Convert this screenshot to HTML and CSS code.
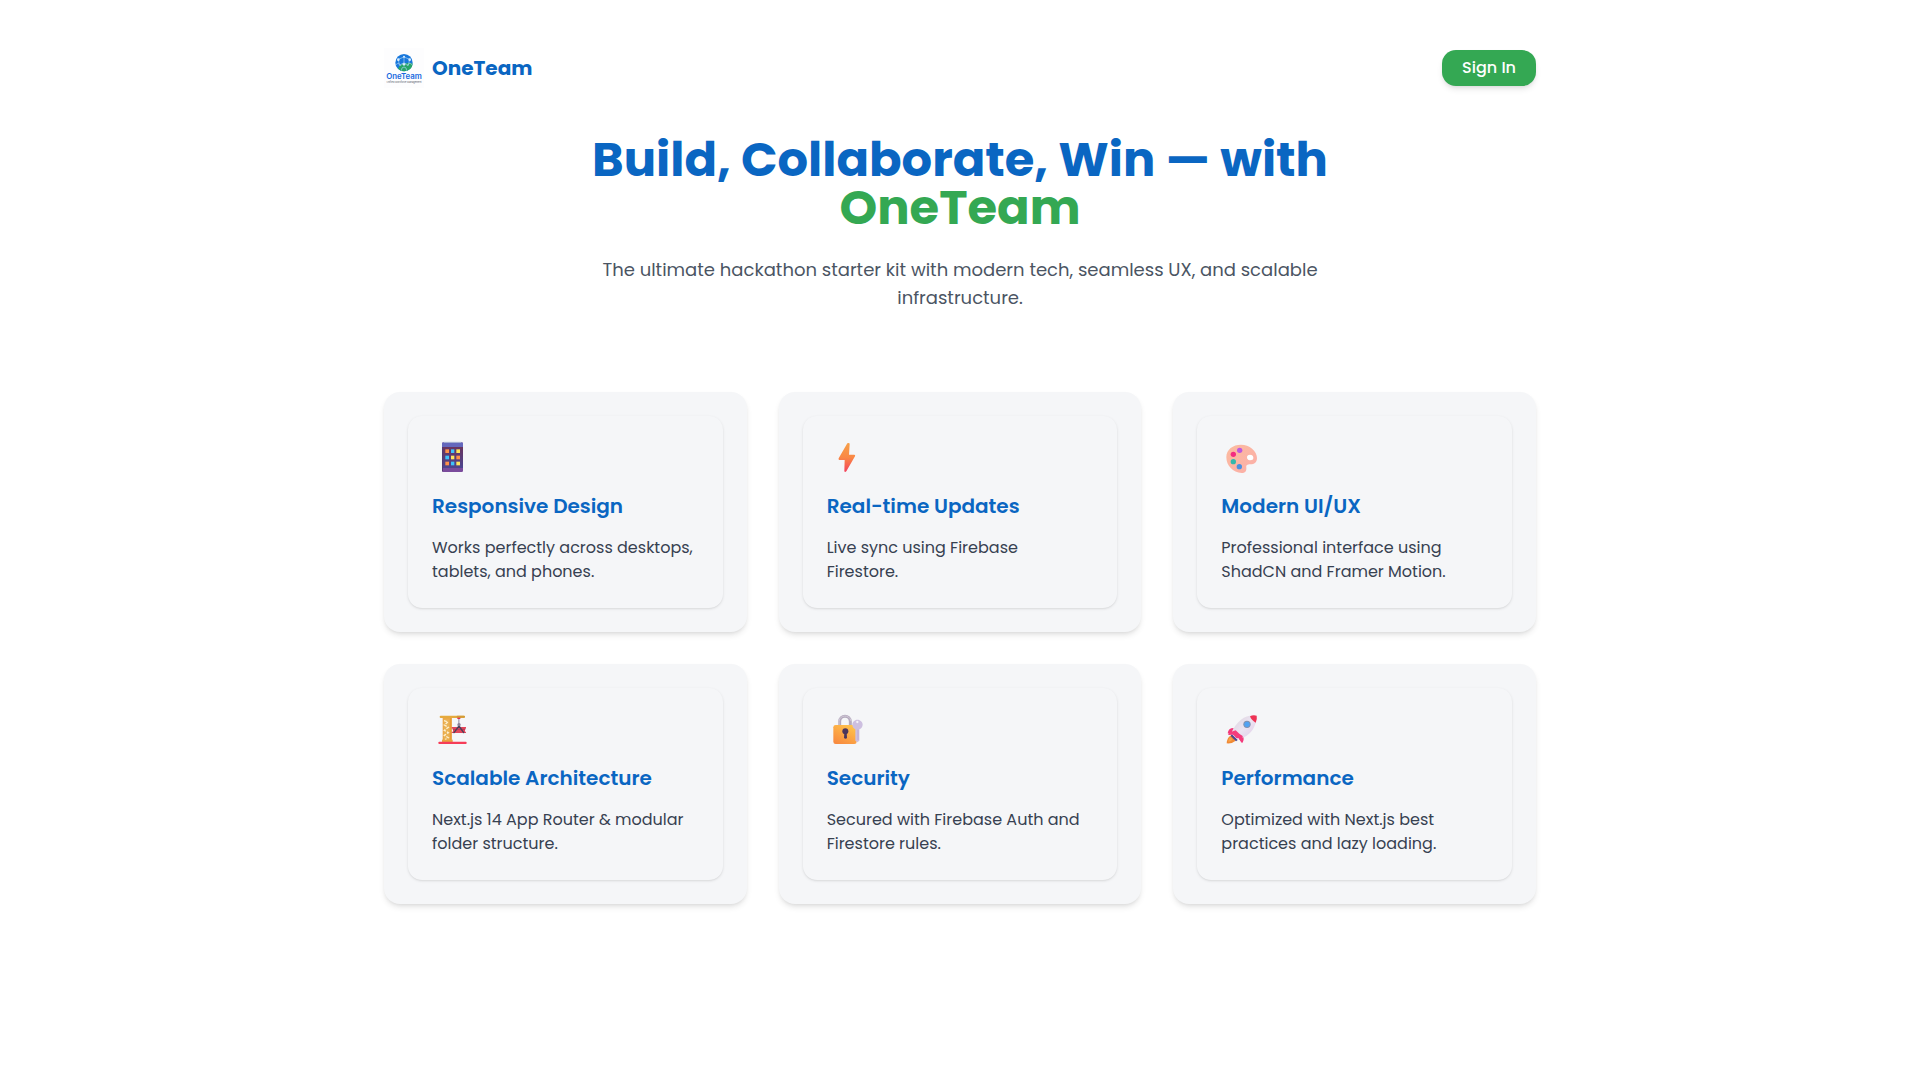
FILE: index.html
```html
<!DOCTYPE html>
<html lang="en">
<head>
<meta charset="utf-8">
<title>OneTeam</title>
<link rel="stylesheet" href="styles.css">
</head>
<body>
<div class="page">
  <header class="nav">
    <div class="brand">
      <svg class="logo" viewBox="0 0 120 120">
        <rect width="120" height="120" fill="#fdfdfe"/>
        <circle cx="60" cy="44" r="26" fill="#1877dc"/>
        <path d="M42 62 Q50 44 60 49 Q73 41 86 47 Q84 67 61 70 Q50 70 42 62Z" fill="#27a568"/>
        <g fill="none" stroke="#a9d3f5" stroke-width="2">
          <path d="M43 34 L60 27 L77 34 L73 52 L60 44 L46 52 Z M60 27 V44"/>
          <path d="M52 68 Q52 57 60 57 Q68 57 68 68 M36 50 Q44 41 51 54 M84 50 Q76 41 69 54"/>
        </g>
        <g fill="#d8ecfd"><circle cx="60" cy="26" r="3"/><circle cx="43" cy="35" r="4"/><circle cx="77" cy="35" r="4"/><circle cx="60" cy="49" r="4"/></g>
        <text class="logo-name" x="60" y="94" text-anchor="middle">OneTeam</text>
        <text class="logo-tag" x="60" y="105" text-anchor="middle">Unified Workforce Management</text>
      </svg>
      <span class="brand-name">OneTeam</span>
    </div>
    <button class="signin">Sign In</button>
  </header>

  <section class="hero">
    <h1 class="headline">Build, Collaborate, Win — with <span class="accent">OneTeam</span></h1>
    <p class="lead">The ultimate hackathon starter kit with modern tech, seamless UX, and scalable infrastructure.</p>
  </section>

  <main class="features">
    <div class="card"><div class="panel">
      <svg class="icon" viewBox="6 30 120 120">
        <defs><linearGradient id="tab" x1="0" y1="0" x2="0" y2="1"><stop offset="0" stop-color="#69345f"/><stop offset="1" stop-color="#4b4590"/></linearGradient></defs>
        <rect x="36" y="37" width="63" height="89" rx="4" fill="#7a4b9c"/>
        <path d="M40 37H95l4 3v11H36V40z" fill="#6468bd"/>
        <path d="M41 37H94" stroke="#aebbd8" stroke-width="3"/>
        <rect x="36" y="51" width="63" height="63" fill="url(#tab)"/>
        <path d="M37.500 51V124" stroke="#523973" stroke-width="3"/>
        <g fill="#ff9148"><rect x="46" y="58" width="11" height="11"/><rect x="79" y="77" width="11" height="11"/><rect x="46" y="95" width="11" height="11"/></g>
        <g fill="#3fc2fb"><rect x="63" y="58" width="10" height="11"/><rect x="46" y="77" width="11" height="11"/><rect x="63" y="95" width="10" height="11"/></g>
        <g fill="#ffe65c"><rect x="79" y="58" width="11" height="11"/><rect x="63" y="77" width="10" height="11"/><rect x="79" y="95" width="11" height="11"/></g>
      </svg>
      <h2 class="title">Responsive Design</h2>
      <p class="text">Works perfectly across desktops, tablets, and phones.</p>
    </div></div>

    <div class="card"><div class="panel">
      <svg class="icon" viewBox="8 30 120 120">
        <defs><linearGradient id="bolt" x1="0" y1="0" x2="0" y2="1"><stop offset="0" stop-color="#f6a04a"/><stop offset=".5" stop-color="#fa8845"/><stop offset="1" stop-color="#f3415c"/></linearGradient></defs>
        <path d="M69 39.500Q76 37 76 42L74 74H90Q94 75 92 79L66 124Q61 128 60 123L61 90H45Q41 89 43 85Z" fill="url(#bolt)"/>
      </svg>
      <h2 class="title">Real-time Updates</h2>
      <p class="text">Live sync using Firebase Firestore.</p>
    </div></div>

    <div class="card"><div class="panel">
      <svg class="icon" viewBox="16 30 120 120">
        <defs><linearGradient id="pal" x1="0" y1="0" x2="1" y2="1"><stop offset="0" stop-color="#fcbb9f"/><stop offset="1" stop-color="#fbaea9"/></linearGradient></defs>
        <path d="M76 44C101 44 124 62 124 84C124 97 116 103 104 103C94 103 91 106 92 113C93 123 88 129 78 129C52 128 32 107 32 82C32 58 52 44 76 44ZM103 74C96 74 93 78 94 83C95 88 99 91 104 91C111 91 114 87 113 82C112 77 109 74 103 74Z" fill="url(#pal)" fill-rule="evenodd"/>
        <ellipse cx="103.500" cy="82.500" rx="8.500" ry="7.500" fill="#fff"/>
        <circle cx="72" cy="61" r="8" fill="#bd58df"/><circle cx="53" cy="73" r="8" fill="#f32c80"/><circle cx="53" cy="95" r="8" fill="#32b8ac"/><circle cx="71" cy="110" r="8" fill="#498fe0"/>
      </svg>
      <h2 class="title">Modern UI/UX</h2>
      <p class="text">Professional interface using ShadCN and Framer Motion.</p>
    </div></div>

    <div class="card"><div class="panel">
      <svg class="icon" viewBox="6 24 120 120">
        <path d="M38 41H65V114H38Z" fill="#eba747"/>
        <path d="M42 46H58V108H42Z" fill="#e9b255"/>
        <path d="M42 50L54 54L43 63L55 70L43 79L55 86L43 94L55 101L45 107" fill="none" stroke="#fff0cf" stroke-width="4" stroke-dasharray="9 4"/>
        <path d="M60 42H65V109H60Z" fill="#e99a35"/>
        <rect x="29" y="35" width="75" height="7" rx="3" fill="#e5aa3e"/>
        <rect x="80" y="35" width="25" height="6" rx="2" fill="#d39c38"/>
        <rect x="36" y="107" width="32" height="7" fill="#e9a440"/>
        <rect x="25" y="113" width="85" height="7" rx="3" fill="#f63d58"/>
        <path d="M82 41H91V45H82Z" fill="#dd3151"/>
        <path d="M86.500 45V61" stroke="#a7a0b4" stroke-width="4"/>
        <path d="M65 69H108V74H105V83H108V87H65V83H69V74H65Z" fill="#e2475b"/>
        <path d="M68 76H106" stroke="#ba3853" stroke-width="3"/>
        <path d="M87 66L72 86M87 66L101 86" stroke="#4c3e59" stroke-width="4" stroke-linecap="round"/>
        <circle cx="87" cy="62" r="5" fill="#8b8298"/>
      </svg>
      <h2 class="title">Scalable Architecture</h2>
      <p class="text">Next.js 14 App Router &amp; modular folder structure.</p>
    </div></div>

    <div class="card"><div class="panel">
      <svg class="icon" viewBox="8 24 120 120">
        <defs><linearGradient id="lock" x1=".8" y1="0" x2=".2" y2="1"><stop offset="0" stop-color="#ffc44c"/><stop offset="1" stop-color="#f88a3f"/></linearGradient></defs>
        <path d="M46 68V53C46 31 78 31 78 53V68" fill="none" stroke="#b5aabd" stroke-width="9"/>
        <path d="M44 66V52C45 32 76 30 80 51" fill="none" stroke="#d2cad9" stroke-width="3"/>
        <rect x="27" y="63" width="70" height="57" rx="7" fill="url(#lock)"/>
        <circle cx="63" cy="82" r="9" fill="#4b365c"/><path d="M60 85H67L68 102Q64 107 59 102Z" fill="#4b365c"/>
        <path d="M99 47C108 47 115 54 115 62C115 69 110 74 105 76V110L99 115L93 110V76C88 73 84 68 84 62C84 54 91 47 99 47Z" fill="#cdbfe0"/>
        <path d="M101 77V108" stroke="#bbaad3" stroke-width="3"/><circle cx="99" cy="54" r="3.500" fill="#f4f2f8"/>
      </svg>
      <h2 class="title">Security</h2>
      <p class="text">Secured with Firebase Auth and Firestore rules.</p>
    </div></div>

    <div class="card"><div class="panel">
      <svg class="icon" viewBox="16 24 120 120">
        <defs><linearGradient id="body" x1="0" y1="0" x2="1" y2="1"><stop offset="0" stop-color="#d9d0da"/><stop offset=".5" stop-color="#ece4f2"/><stop offset="1" stop-color="#dcc8e6"/></linearGradient></defs>
        <path d="M44 95Q34 101 33 118Q48 120 60 110L51 96Z" fill="#f08a35"/>
        <path d="M43 99Q38 107 38 114Q47 112 51 106Z" fill="#faa44a"/>
        <path d="M54 72Q38 72 36 88L50 86ZM83 94Q86 108 80 117L68 103Z" fill="#f2397a"/>
        <path d="M124 36Q98 31 76 47Q54 66 47 88L69 106Q96 98 111 77Q123 57 124 36Z" fill="url(#body)"/>
        <path d="M123 35Q113 31 103 37Q107 49 120 56Q125 43 123 35Z" fill="#ee3354"/>
        <path d="M48 90L66 108L61 112L45 96Z" fill="#4a4590"/>
        <path d="M60 79Q50 82 37 89Q37 95 46 92Q53 90 57 97Q62 105 68 102Q75 107 77 117Q83 108 81 96Q72 92 60 79Z" fill="#f43c7d"/>
        <circle cx="94" cy="61" r="11" fill="#8291b0"/><circle cx="94" cy="61" r="8" fill="#52a2f2"/>
      </svg>
      <h2 class="title">Performance</h2>
      <p class="text">Optimized with Next.js best practices and lazy loading.</p>
    </div></div>
  </main>
</div>
</body>
</html>
```
FILE: styles.css
```css
* { box-sizing: border-box; margin: 0; padding: 0; }
body {
  min-height: 100vh;
  background: #fff;
  font-family: "Poppins", "Inter", sans-serif;
  font-size: 16px;
  line-height: 24px;
}
.page { max-width: 1152px; margin: 0 auto; padding-top: 48px; }

.nav { display: flex; align-items: center; justify-content: space-between; height: 40px; }
.brand { display: flex; align-items: center; gap: 8px; }
.logo { display: block; width: 40px; height: 40px; overflow: visible; }
.logo-name { font: 600 23.5px/1 "Inter", sans-serif; fill: #1769e0; }
.logo-tag { font: 400 7px/1 "Inter", sans-serif; fill: #59606c; }
.brand-name { font-size: 20px; line-height: 28px; font-weight: 700; color: #0a66c2; }
.signin {
  height: 36px;
  padding: 0 20px;
  border: 0;
  border-radius: 14px;
  background: #34a853;
  color: #fff;
  font: 500 16px/24px "Poppins", "Inter", sans-serif;
  box-shadow: 0 4px 6px -1px rgba(0, 0, 0, .1), 0 2px 4px -2px rgba(0, 0, 0, .1);
}

.hero { width: 768px; margin: 48px auto 80px; text-align: center; }
.headline { font-size: 48px; line-height: 48px; font-weight: 700; color: #0a66c2; }
.accent { color: #34a853; }
.lead { margin-top: 24px; font-size: 18px; line-height: 28px; color: #4b5563; }

.features { display: grid; grid-template-columns: repeat(3, 1fr); gap: 32px; }
.card {
  padding: 24px;
  border-radius: 16px;
  background: #f5f6f8;
  box-shadow: 0 4px 6px -1px rgba(0, 0, 0, .1), 0 2px 4px -2px rgba(0, 0, 0, .1);
}
.panel {
  height: 192px;
  padding: 24px;
  border-radius: 14px;
  background: #f5f6f8;
  box-shadow: 0 1px 3px rgba(0, 0, 0, .1), 0 1px 2px -1px rgba(0, 0, 0, .1);
}
.icon { display: block; width: 40px; height: 40px; }
.title { margin-top: 12px; font-size: 20px; line-height: 28px; font-weight: 600; color: #0a66c2; }
.text { margin-top: 16px; color: #374151; }
```
